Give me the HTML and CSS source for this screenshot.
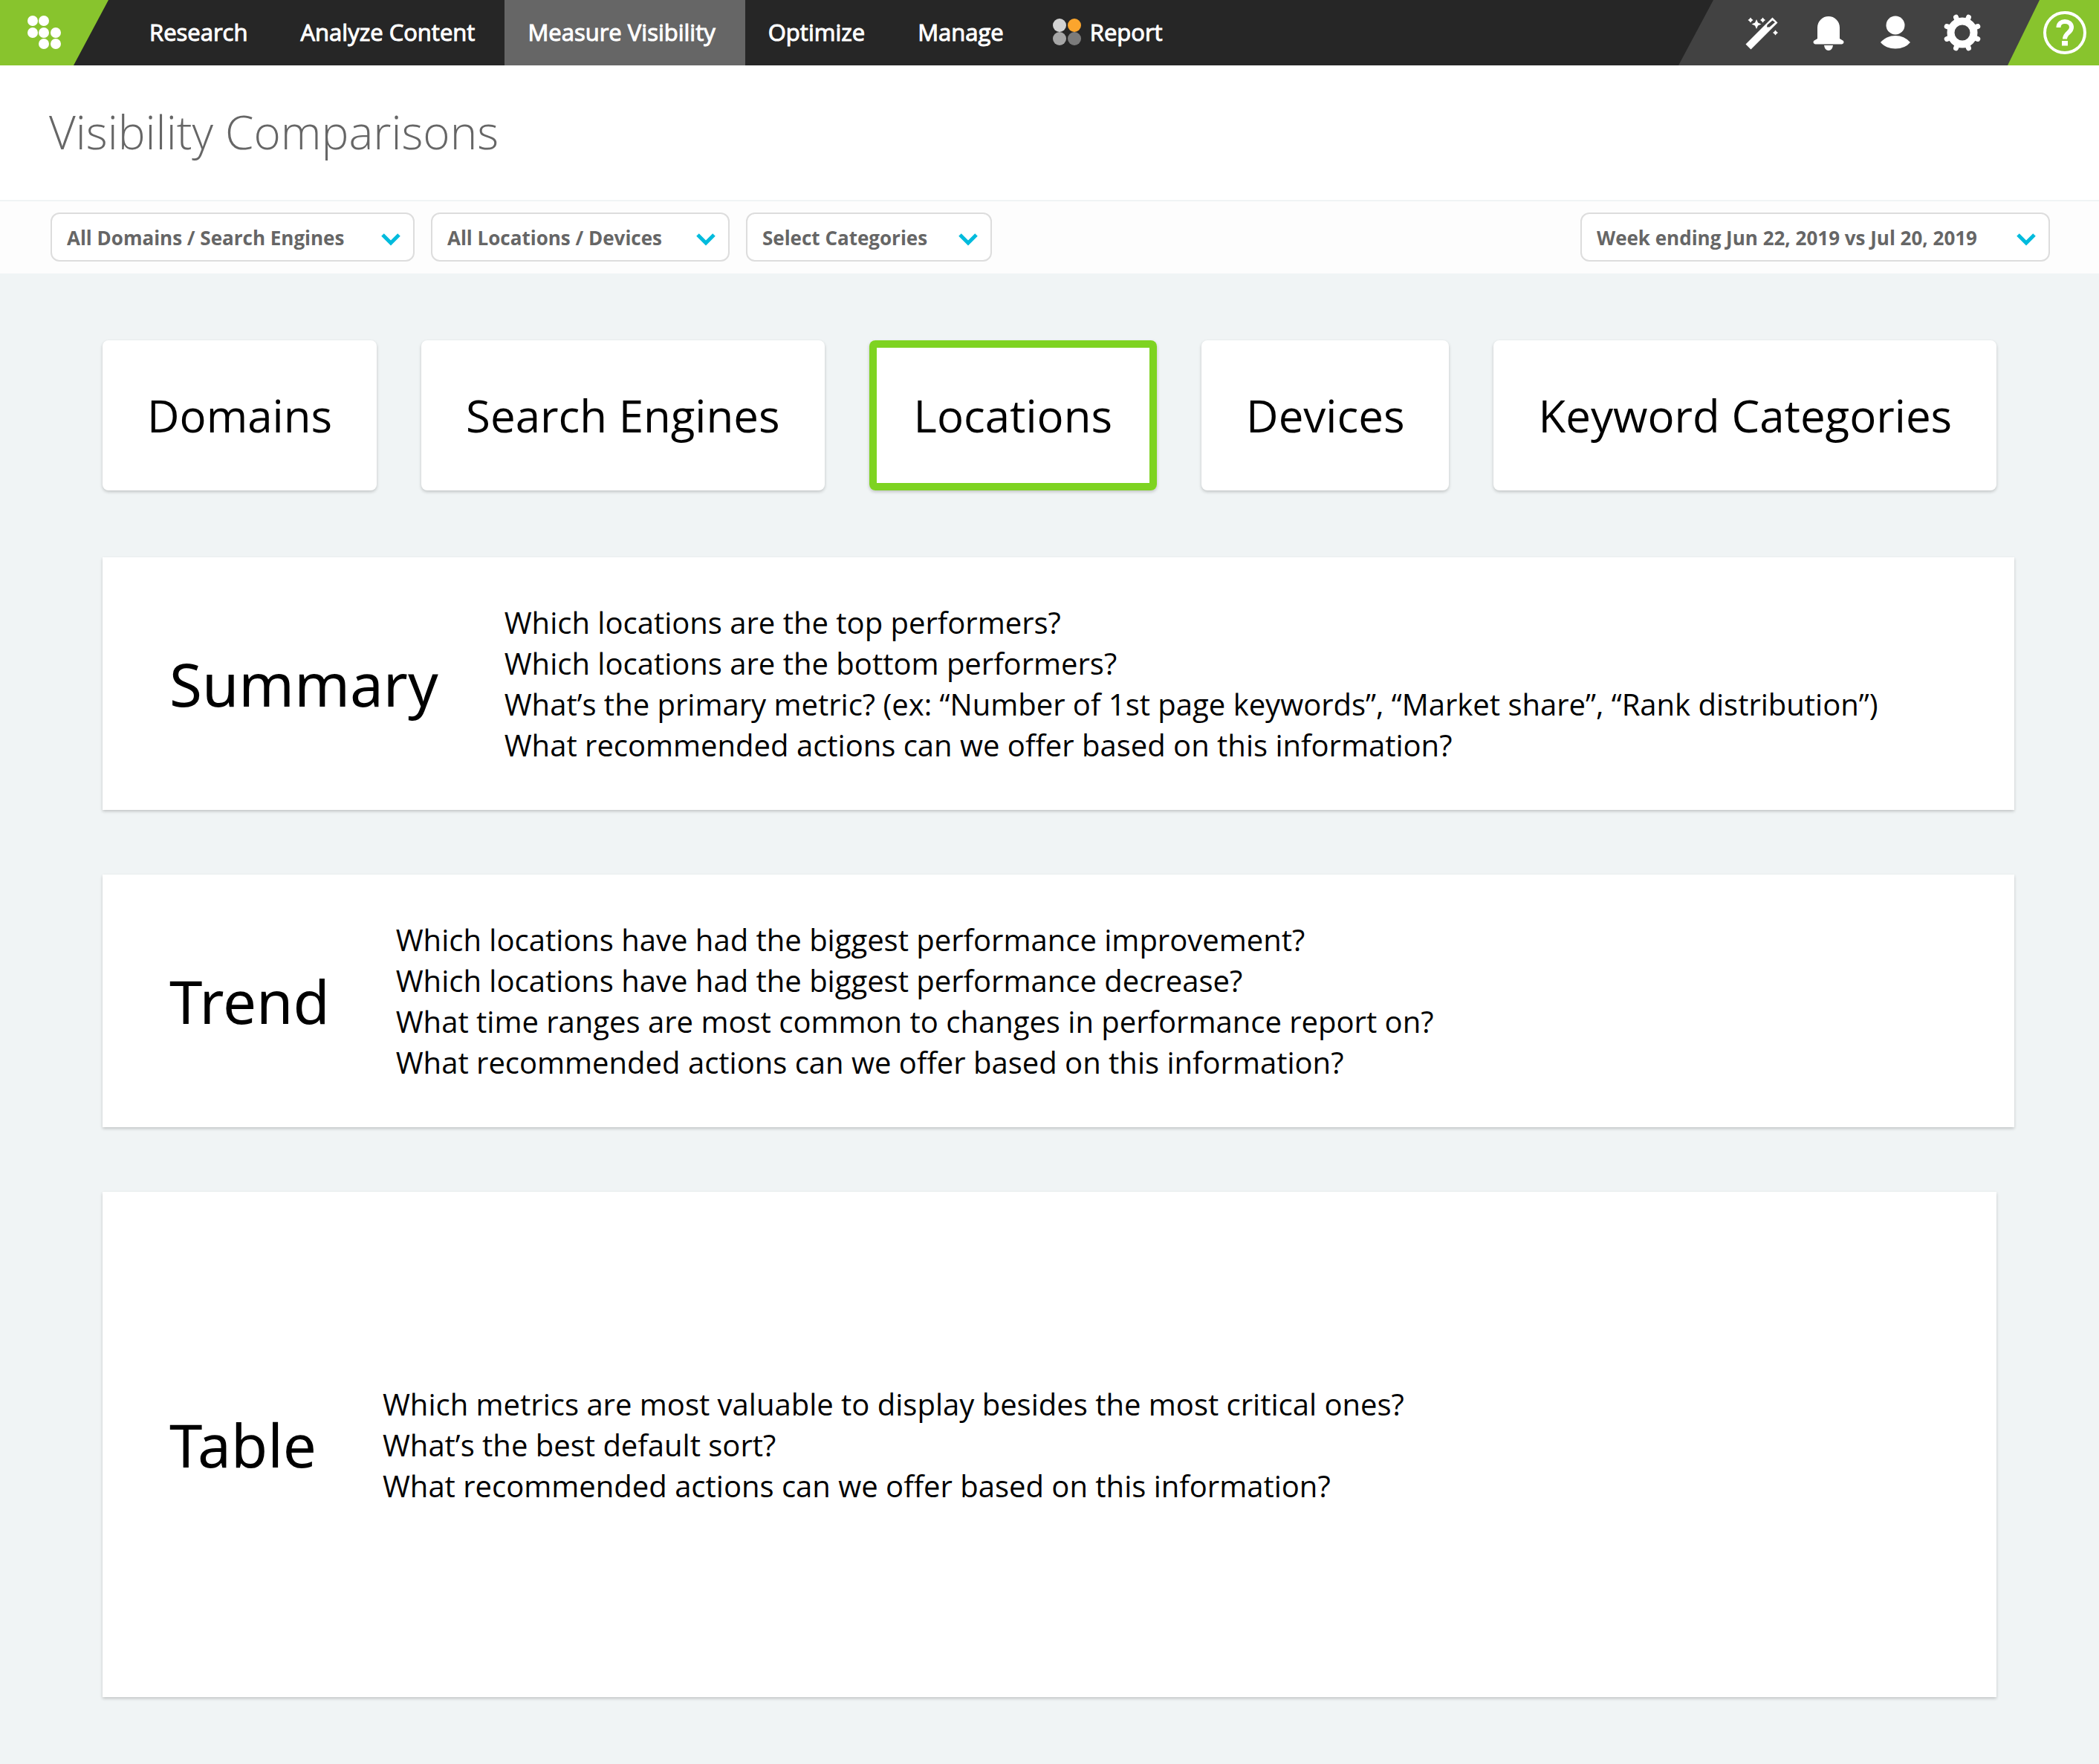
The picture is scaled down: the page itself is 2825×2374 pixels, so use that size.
FILE: index.html
```html
<!DOCTYPE html>
<html lang="en">
<head>
<meta charset="utf-8">
<title>Visibility Comparisons</title>
<meta name="viewport" content="width=device-width, initial-scale=1">
<link rel="stylesheet" href="styles.css">
</head>
<body>
<header class="topbar">
  <a class="logo" href="#" aria-label="Home">
    <svg width="46" height="46" viewBox="0 0 46 46" fill="#fff" aria-hidden="true">
      <circle cx="7" cy="7" r="7"/><circle cx="22" cy="7" r="7"/>
      <circle cx="7" cy="23" r="7"/><circle cx="22" cy="23" r="7"/><circle cx="38" cy="23" r="7"/>
      <circle cx="22" cy="38" r="7"/><circle cx="38" cy="38" r="7"/>
    </svg>
  </a>
  <nav class="nav">
    <a href="#">Research</a>
    <a href="#">Analyze Content</a>
    <a class="active" href="#">Measure Visibility</a>
    <a href="#">Optimize</a>
    <a href="#">Manage</a>
    <a class="report" href="#">
      <svg width="38" height="36" viewBox="0 0 38 36" aria-hidden="true">
        <circle cx="9" cy="9" r="9" fill="#d3d3d3"/><circle cx="29" cy="9" r="9" fill="#fba52d"/>
        <circle cx="9" cy="27" r="9" fill="#a6a6a6"/><circle cx="29" cy="27" r="9" fill="#7b7b7b"/>
      </svg>
      Report
    </a>
  </nav>
  <div class="tools">
    <button type="button" aria-label="Wizard">
      <svg width="50" height="50" viewBox="0 0 50 50" aria-hidden="true">
        <path fill="#fff" fill-rule="evenodd" d="M3.500 40.500L39.500 4.500L46.500 11.500L10.500 47.500ZM32 17.500L35.500 17.500L43 11L39.500 8.500L32.500 14.500Z"/>
        <path fill="#fff" d="M18 7l2 4.500l4.500 2l-4.500 2l-2 4.500l-2-4.500l-4.500-2l4.500-2zM10 4.500l1.500 2l2 1.500l-2 1.500l-1.500 2l-1.500-2l-2-1.500l2-1.500zM26.500 4.500l1.500 2l2 1.500l-2 1.500l-1.500 2l-1.500-2l-2-1.500l2-1.500zM43.500 21.500l1.500 2l2 1.500l-2 1.500l-1.500 2l-1.500-2l-2-1.500l2-1.500z"/>
      </svg>
    </button>
    <button type="button" aria-label="Notifications">
      <svg width="50" height="50" viewBox="0 0 50 50" fill="#fff" aria-hidden="true">
        <path d="M10 33V18A15 15 0 0 1 40 18V33L45 36Q46.500 39.500 43 40.500H7Q3.500 39.500 5 36ZM19 42H31Q30 49 25 49T19 42Z"/>
      </svg>
    </button>
    <button type="button" aria-label="Account">
      <svg width="50" height="50" viewBox="0 0 50 50" fill="#fff" aria-hidden="true">
        <circle cx="25" cy="15" r="12.500"/><path d="M5 38Q13 29 25 29T45 38Q38 46.500 25 46.500T5 38Z"/>
      </svg>
    </button>
    <button type="button" aria-label="Settings">
      <svg width="50" height="50" viewBox="-25 -25 50 50" aria-hidden="true">
        <circle r="15.500" fill="none" stroke="#fff" stroke-width="10"/>
        <g stroke="#fff" stroke-width="7" stroke-linecap="round" fill="none">
          <path d="M7 -17L8.500 -20.800M17 -7L20.800 -8.500M17 7L20.800 8.500M7 17L8.500 20.800M-7 17L-8.500 20.800M-17 7L-20.800 8.500M-17 -7L-20.800 -8.500M-7 -17L-8.500 -20.800"/>
        </g>
      </svg>
    </button>
  </div>
  <a class="help" href="#" aria-label="Help">
    <svg width="58" height="58" viewBox="-29 -29 58 58" fill="none" stroke="#fff" aria-hidden="true">
      <circle r="27" stroke-width="4"/>
      <path stroke-width="6" d="M-8.500 -7C-8.500 -12.500 -4.500 -15 0 -15C5 -15 9 -12 9 -7C9 0 0 0 0 8.500"/>
      <path stroke="none" fill="#fff" d="M-4 11H4V17.500H-4Z"/>
    </svg>
  </a>
</header>

<div class="title-bar"><h1>Visibility Comparisons</h1></div>

<div class="filters">
  <select class="domains" aria-label="Domains and search engines"><option>All Domains / Search Engines</option></select>
  <select class="locations" aria-label="Locations and devices"><option>All Locations / Devices</option></select>
  <select aria-label="Categories"><option>Select Categories</option></select>
  <select class="period" aria-label="Comparison period"><option>Week ending Jun 22, 2019 vs Jul 20, 2019</option></select>
</div>

<main class="content">
  <div class="tabs">
    <button type="button">Domains</button>
    <button type="button">Search Engines</button>
    <button type="button" class="selected" aria-pressed="true">Locations</button>
    <button type="button">Devices</button>
    <button type="button">Keyword Categories</button>
  </div>
  <section class="card wide">
    <h2>Summary</h2>
    <ul>
      <li>Which locations are the top performers?</li>
      <li>Which locations are the bottom performers?</li>
      <li>What’s the primary metric? (ex: “Number of 1st page keywords”, “Market share”, “Rank distribution”)</li>
      <li>What recommended actions can we offer based on this information?</li>
    </ul>
  </section>
  <section class="card wide">
    <h2>Trend</h2>
    <ul>
      <li>Which locations have had the biggest performance improvement?</li>
      <li>Which locations have had the biggest performance decrease?</li>
      <li>What time ranges are most common to changes in performance report on?</li>
      <li>What recommended actions can we offer based on this information?</li>
    </ul>
  </section>
  <section class="card tall">
    <h2>Table</h2>
    <ul>
      <li>Which metrics are most valuable to display besides the most critical ones?</li>
      <li>What’s the best default sort?</li>
      <li>What recommended actions can we offer based on this information?</li>
    </ul>
  </section>
</main>
</body>
</html>
```
FILE: styles.css
```css
* { box-sizing: border-box; }

body {
  margin: 0;
  background: #f0f4f5;
  color: #000;
  font-family: "Open Sans", "Noto Sans", sans-serif;
}

button, select { font-family: inherit; }
svg { display: block; flex: none; }

/* Top navigation */
.topbar {
  display: flex;
  height: 88px;
  background: #262626;
}

.logo {
  display: flex;
  align-items: center;
  width: 146px;
  padding-left: 37px;
  background: #88c42d;
  clip-path: polygon(0 0, 100% 0, 99px 100%, 0 100%);
}

.nav { display: flex; padding-left: 24px; }

.nav a {
  display: flex;
  align-items: center;
  gap: 12px;
  padding: 0 40px 2px 31px;
  color: #fff;
  font-size: 31px;
  -webkit-text-stroke: 1px #fff;
  text-decoration: none;
  white-space: nowrap;
}

.nav .active { background: #666; }
.nav .report { padding-left: 26px; }

.tools {
  display: flex;
  align-items: center;
  gap: 40px;
  margin-left: auto;
  margin-right: -43px;
  padding: 0 79px 0 87px;
  background: #424242;
  clip-path: polygon(47px 0, 100% 0, 100% 100%, 0 100%);
}

.tools button { padding: 0; border: 0; background: none; }

.help {
  display: flex;
  align-items: center;
  padding: 0 17px 0 48px;
  background: #88c42d;
  clip-path: polygon(43px 0, 100% 0, 100% 100%, 0 100%);
}

/* Page title and filters */
.title-bar {
  padding: 47px 66px 50px;
  border-bottom: 2px solid #f0f4f5;
  background: #fff;
}

h1, h2 { margin: 0; }

h1 {
  color: #666;
  font-size: 62px;
  font-weight: 300;
  line-height: 84px;
}

.filters {
  display: flex;
  flex-wrap: wrap;
  gap: 22px;
  padding: 15px 66px 16px 68px;
  background: #fdfdfd;
}

.filters select {
  appearance: none;
  height: 66px;
  padding: 2px 84px 0 20px;
  border: 2px solid #ddd;
  border-radius: 12px;
  background: #fff url("data:image/svg+xml,%3Csvg xmlns='http://www.w3.org/2000/svg' width='26' height='18' fill='none' stroke='%2300bbdd' stroke-width='5'%3E%3Cpath d='M2 3L13 14L24 3'/%3E%3C/svg%3E") no-repeat right 17px top 25px;
  color: #666;
  font-size: 26px;
  font-weight: 700;
}

.filters .domains { min-width: 490px; }
.filters .locations { min-width: 402px; }
.filters .period { min-width: 632px; margin-left: auto; }

/* Comparison tabs and question cards */
.content {
  display: flex;
  flex-direction: column;
  gap: 87px;
  padding: 90px 138px 88px;
}

.tabs { display: flex; gap: 60px; margin-bottom: 3px; }

.tabs button {
  padding: 60px;
  border: 0;
  border-radius: 8px;
  background: #fff;
  box-shadow: 0 2px 4px rgba(0, 0, 0, 0.2);
  color: #000;
  font-size: 60px;
  line-height: 82px;
  white-space: nowrap;
}

.tabs .selected {
  box-shadow: inset 0 0 0 10px #7ed321, 0 2px 4px rgba(0, 0, 0, 0.2);
}

.card {
  display: flex;
  align-items: center;
  gap: 89px;
  padding: 60px 90px;
  background: #fff;
  box-shadow: 0 2px 4px rgba(0, 0, 0, 0.2);
}

.card.wide { margin-right: -24px; }
.card.tall { min-height: 680px; }

h2 {
  font-family: "Noto Sans", "Open Sans", sans-serif;
  font-size: 80px;
  font-weight: 400;
  line-height: 110px;
}

.card ul {
  margin: 0;
  padding: 0;
  list-style: none;
  font-size: 40px;
  line-height: 55px;
}
```
